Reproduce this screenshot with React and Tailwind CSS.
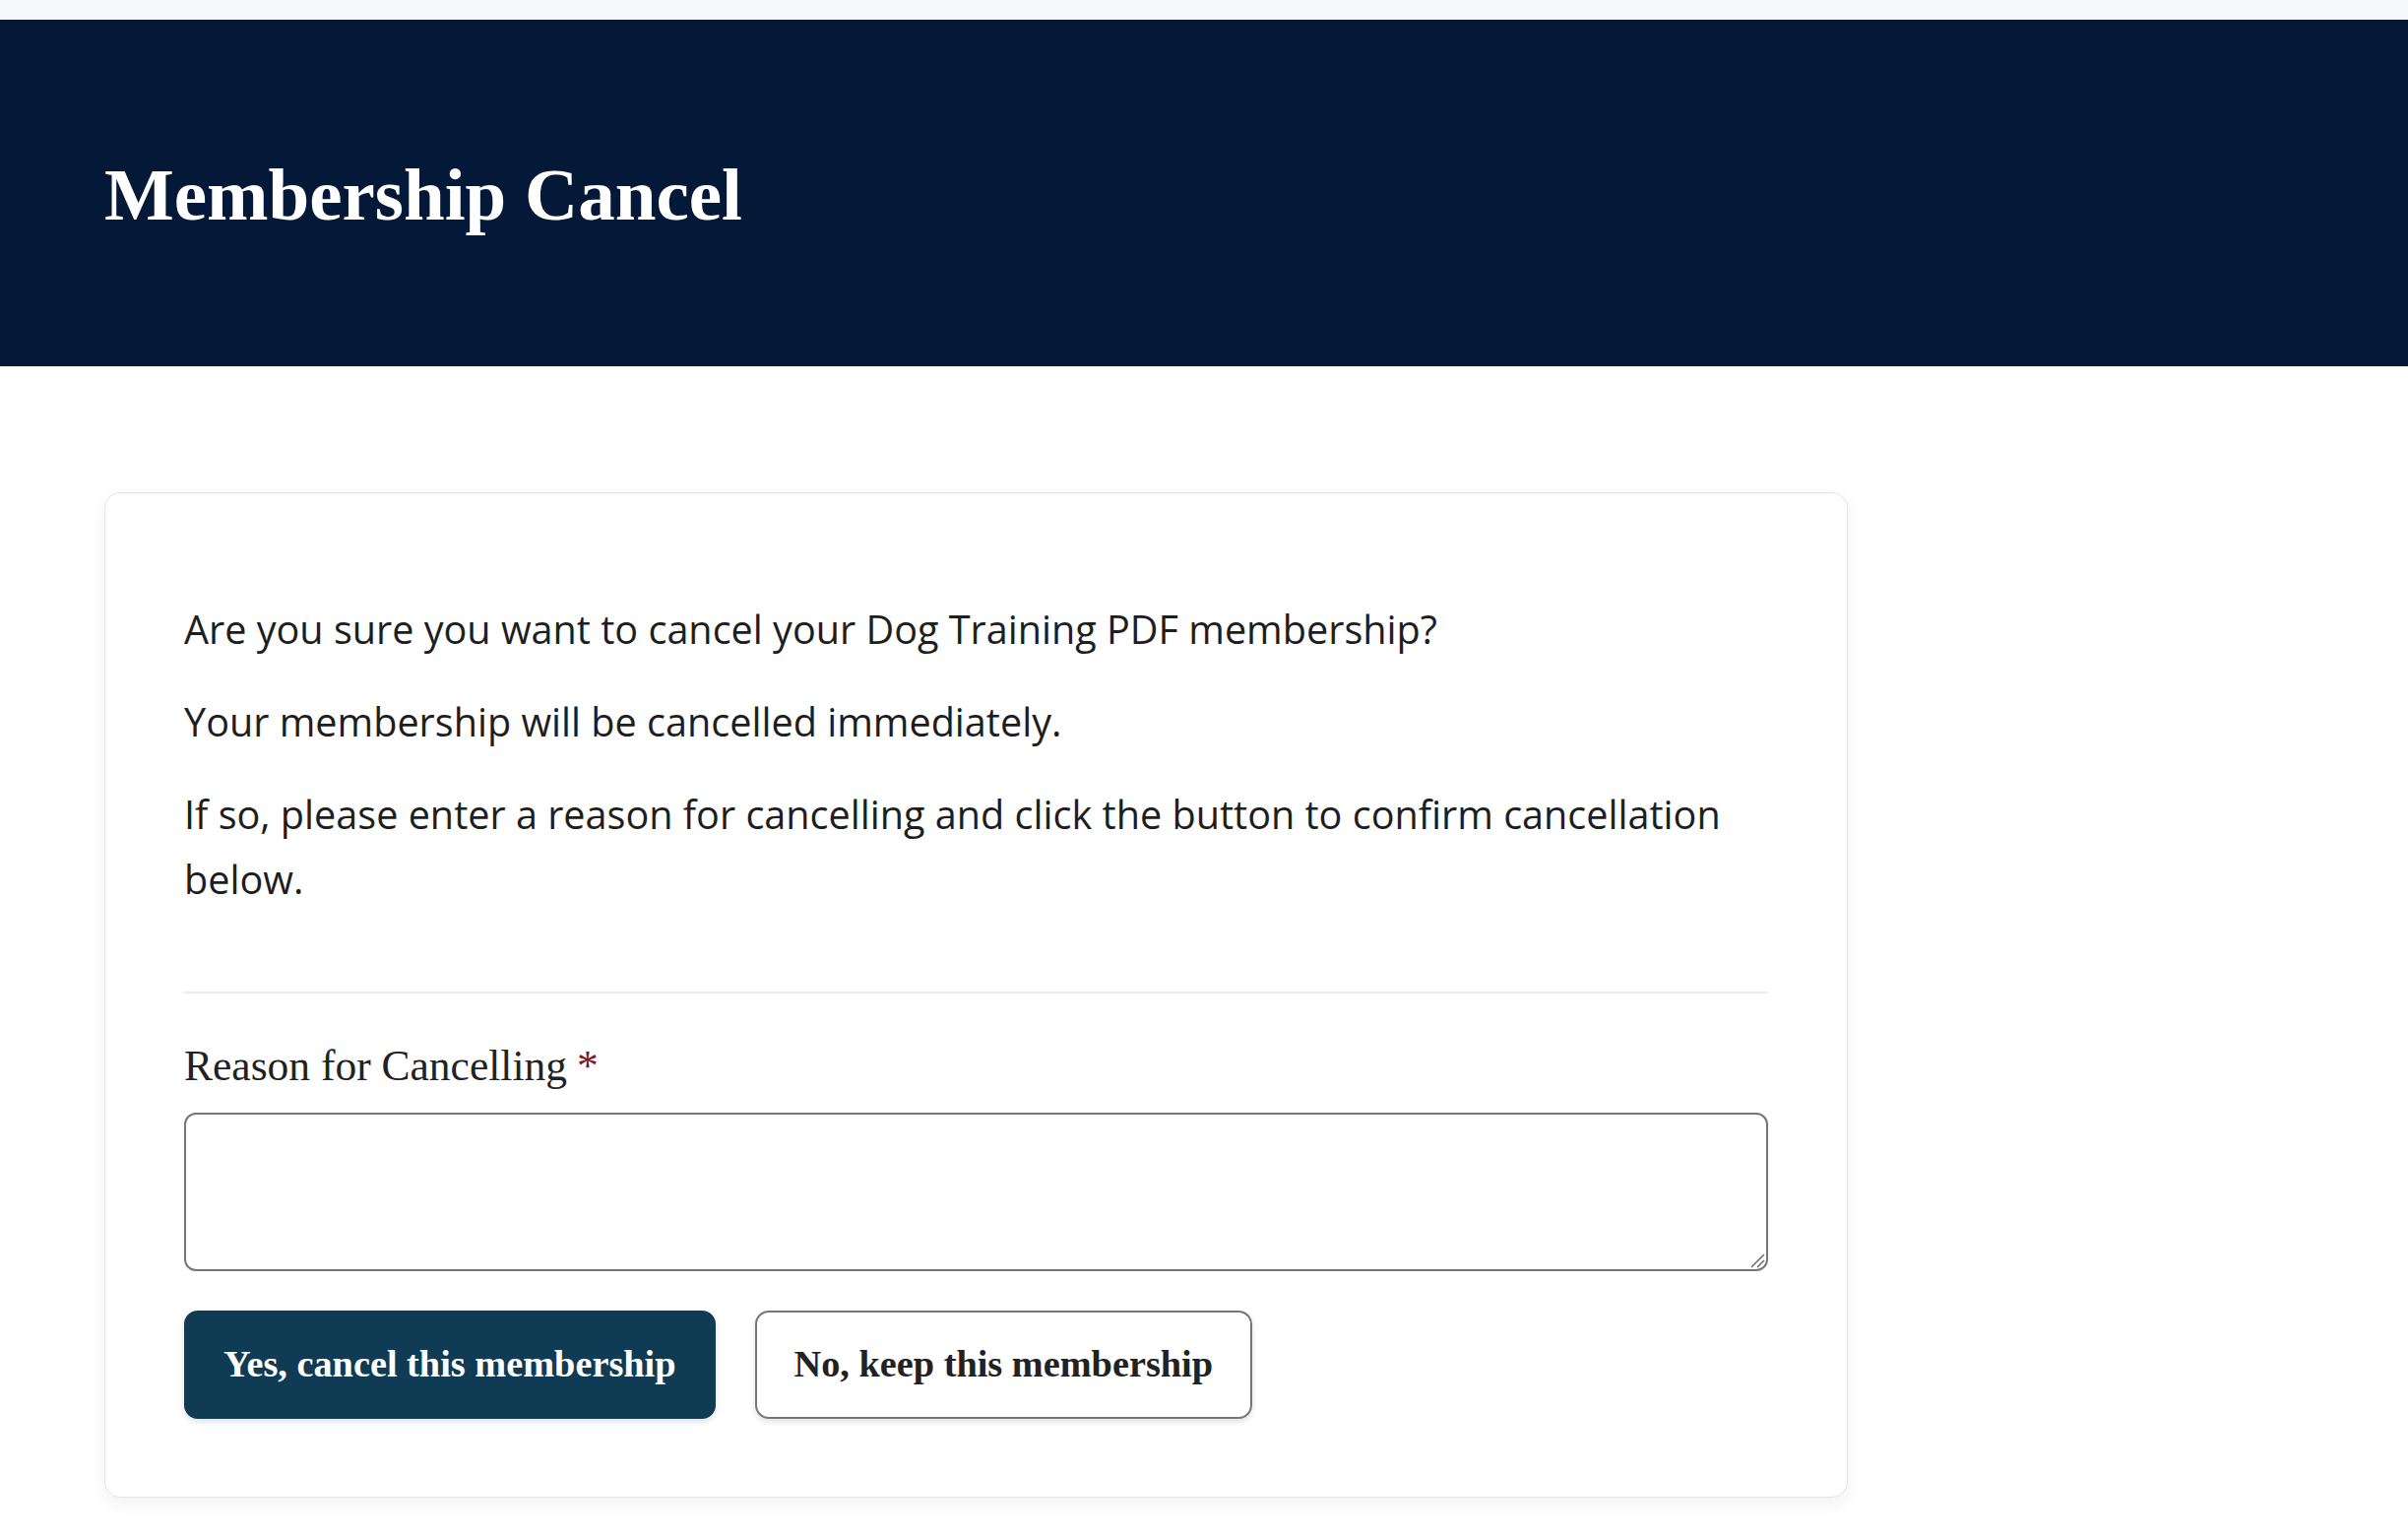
import React from "react";

export default function App() {
  return (
    <div className="min-h-[1562px] w-full bg-white">
      <div className="h-[20px] bg-[#f7f8fb]" />
      <header className="h-[352px] bg-[#041938] pl-[106px] pt-[140px]">
        <h1 className="text-[75px] leading-none font-bold text-white [font-family:'Liberation_Serif','Times_New_Roman',serif]">
          Membership Cancel
        </h1>
      </header>
      <main className="pl-[106px] pt-[128px] pb-[40px]">
        <div className="w-[1771px] rounded-[16px] border border-[#e4e6e9] bg-white shadow-[0_6px_18px_rgba(0,0,0,0.06)] px-[80px] pt-[105px] pb-[79px]">
          <div className="text-[39.6px] leading-[66px] text-[#1e1e1e] [font-family:'Open_Sans',sans-serif]">
            <p>Are you sure you want to cancel your Dog Training PDF membership?</p>
            <p className="mt-[28px]">Your membership will be cancelled immediately.</p>
            <p className="mt-[28px]">
              If so, please enter a reason for cancelling and click the button to confirm cancellation
              below.
            </p>
          </div>
          <div className="mt-[81px] h-[2px] bg-[#ececec]" />
          <label className="mt-[52px] block text-[43.5px] leading-none text-[#222222] [font-family:'Liberation_Serif','Times_New_Roman',serif]">
            Reason for Cancelling<span className="ml-[10px] text-[#7b1a2a]">*</span>
          </label>
          <div className="relative mt-[25px]">
            <textarea className="block h-[161px] w-full resize-none rounded-[12px] border-2 border-[#767676] bg-white" />
            <svg
              className="pointer-events-none absolute bottom-[3px] right-[3px]"
              width="16"
              height="16"
              viewBox="0 0 16 16"
            >
              <path d="M15 2 L2 15 M15 8 L8 15" stroke="#6f6f6f" strokeWidth="1.6" fill="none" />
            </svg>
          </div>
          <div className="mt-[40px] flex gap-[40px]">
            <button className="flex h-[110px] items-center rounded-[14px] border-2 border-[#0f3b55] bg-[#0f3b55] px-[38px] text-[38.3px] font-bold text-white shadow-[0_3px_6px_rgba(0,0,0,0.12)] [font-family:'Liberation_Serif','Times_New_Roman',serif]">
              Yes, cancel this membership
            </button>
            <button className="flex h-[110px] items-center rounded-[14px] border-2 border-[#767676] bg-white px-[38px] text-[38.3px] font-bold text-[#222222] shadow-[0_3px_6px_rgba(0,0,0,0.12)] [font-family:'Liberation_Serif','Times_New_Roman',serif]">
              No, keep this membership
            </button>
          </div>
        </div>
      </main>
    </div>
  );
}
